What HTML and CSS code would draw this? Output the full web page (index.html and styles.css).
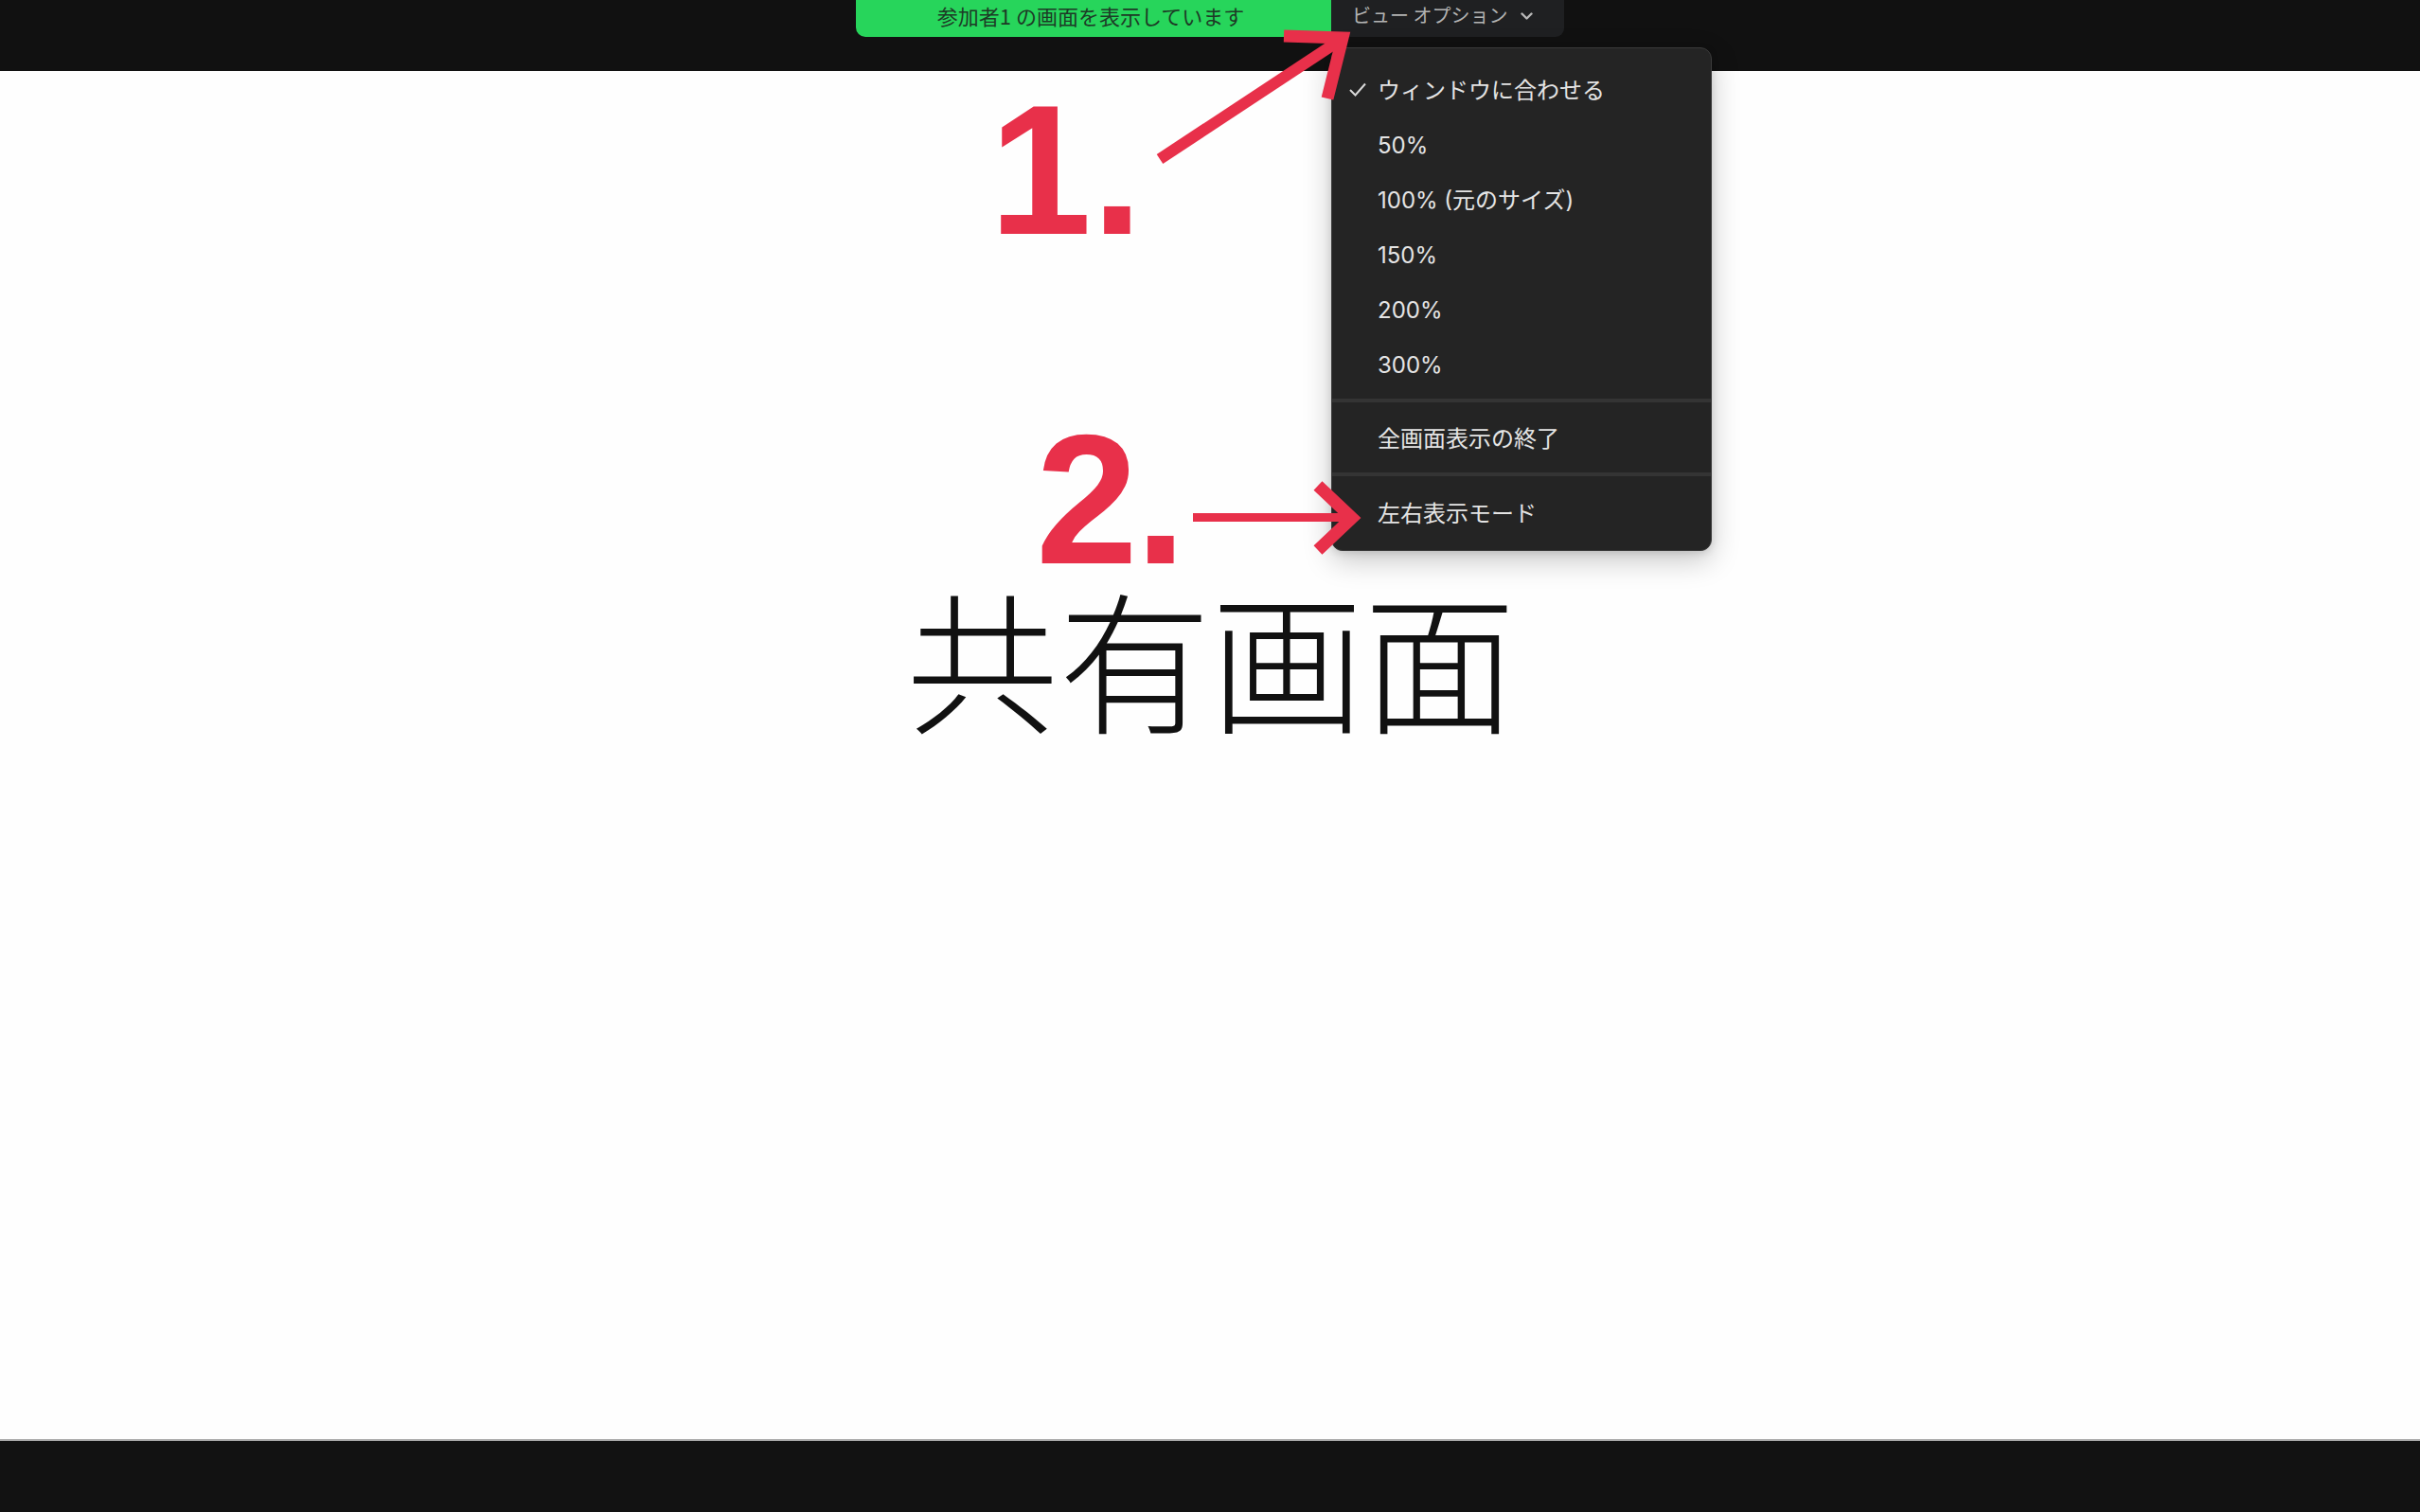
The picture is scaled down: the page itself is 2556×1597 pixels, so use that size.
FILE: index.html
```html
<!DOCTYPE html>
<html lang="ja">
<head>
<meta charset="utf-8">
<title>画面共有</title>
<link rel="stylesheet" href="styles.css">
</head>
<body>
<div class="screen">
  <header class="topbar">
    <div class="share-group">
      <div class="banner">参加者1 の画面を表示しています</div>
      <div class="view-btn">
        <span class="view-label">ビュー オプション</span>
        <svg class="chev" width="13" height="8" viewBox="0 0 13 8"><polyline points="1.5,1.5 6.5,6.5 11.5,1.5" fill="none" stroke="#b8b8b8" stroke-width="2.4" stroke-linecap="round" stroke-linejoin="round"/></svg>
        <div class="menu">
          <div class="menu-section sec-a">
            <div class="menu-item"><span class="check"><svg width="18" height="15" viewBox="0 0 18 15"><polyline points="1,8 6.5,13.5 17,1.5" fill="none" stroke="#d8d8d8" stroke-width="2"/></svg></span><span class="label">ウィンドウに合わせる</span></div>
            <div class="menu-item"><span class="check"></span><span class="label">50%</span></div>
            <div class="menu-item"><span class="check"></span><span class="label">100% (元のサイズ)</span></div>
            <div class="menu-item"><span class="check"></span><span class="label">150%</span></div>
            <div class="menu-item"><span class="check"></span><span class="label">200%</span></div>
            <div class="menu-item"><span class="check"></span><span class="label">300%</span></div>
          </div>
          <div class="menu-sep"></div>
          <div class="menu-section sec-b">
            <div class="menu-item"><span class="check"></span><span class="label">全画面表示の終了</span></div>
          </div>
          <div class="menu-sep"></div>
          <div class="menu-section sec-c">
            <div class="menu-item"><span class="check"></span><span class="label">左右表示モード</span></div>
          </div>
        </div>
      </div>
    </div>
  </header>
  <main class="stage">
    <div class="shared-text">共有画面</div>
  </main>
  <footer class="bottombar"></footer>

  <div class="anno-num num-1">1.</div>
  <div class="anno-num num-2">2.</div>
  <svg class="annotations" width="2556" height="1597" viewBox="0 0 2556 1597">
    <g fill="none" stroke="#e8304a">
      <line x1="1225" y1="168" x2="1410" y2="46" stroke-width="12"/>
      <polyline points="1356,38 1418,40 1402,104" stroke-width="13" stroke-linejoin="miter" stroke-miterlimit="10"/>
      <line x1="1260" y1="546.5" x2="1422" y2="546.5" stroke-width="9"/>
      <polyline points="1392,513 1428,547 1392,581" stroke-width="13" stroke-linejoin="miter" stroke-miterlimit="10"/>
    </g>
  </svg>
</div>
</body>
</html>
```
FILE: styles.css
```css
html, body {
  margin: 0;
  padding: 0;
}
body {
  width: 2556px;
  height: 1597px;
  overflow: hidden;
  font-family: "Noto Sans CJK JP", "Noto Sans", sans-serif;
  background: #111111;
}
.screen {
  position: relative;
  width: 2556px;
  height: 1597px;
  display: flex;
  flex-direction: column;
}
.topbar {
  height: 75px;
  flex: 0 0 75px;
  background: #111111;
  display: flex;
  justify-content: center;
  align-items: flex-start;
  position: relative;
  z-index: 2;
}
.share-group {
  display: flex;
  height: 39px;
}
.banner {
  width: 502px;
  height: 39px;
  background: #27d55b;
  color: #1d3b26;
  font-size: 22px;
  line-height: 33px;
  text-align: center;
  border-radius: 0 0 0 10px;
  padding-right: 6px;
  box-sizing: border-box;
}
.view-btn {
  position: relative;
  width: 246px;
  height: 39px;
  background: #1f2022;
  border-radius: 0 0 9px 0;
  display: flex;
  align-items: center;
  padding: 0 0 8px 22px;
  box-sizing: border-box;
  color: #b3b3b3;
  font-size: 20px;
}
.chev {
  margin-left: 14px;
  margin-top: 2px;
}
.menu {
  position: absolute;
  left: 0;
  top: 50px;
  width: 402px;
  box-sizing: border-box;
  background: #242424;
  border: 1px solid #3b3b3b;
  border-radius: 12px;
  box-shadow: 0 10px 30px rgba(0, 0, 0, 0.22), 0 2px 8px rgba(0, 0, 0, 0.12);
  color: #e4e4e4;
  font-family: "Inter", "Noto Sans CJK JP", sans-serif;
  font-size: 24px;
  overflow: hidden;
}
.menu-section.sec-a { padding: 13px 0 9px; }
.menu-section.sec-b { padding: 7px 0 9px; }
.menu-section.sec-c { padding: 8px 0 12px; }
.menu-item {
  height: 58px;
  box-sizing: border-box;
  display: flex;
  padding: 0 0 0 18px;
}
.check {
  width: 30px;
  flex: 0 0 30px;
  display: flex;
  align-items: center;
  padding-top: 2px;
}
.label {
  display: block;
  line-height: 52px;
  padding-top: 6px;
}
.menu-sep {
  height: 4px;
  background: #343434;
}
.stage {
  flex: 1 1 auto;
  background: #fefefe;
  display: flex;
  flex-direction: column;
  align-items: center;
  position: relative;
  z-index: 1;
}
.shared-text {
  margin-top: 537px;
  font-size: 161px;
  line-height: 1;
  font-weight: 300;
  color: #111111;
  letter-spacing: 0;
  padding-left: 2px;
}
.bottombar {
  flex: 0 0 77px;
  height: 77px;
  background: #121212;
  border-top: 2px solid #a8a8a8;
  box-sizing: border-box;
}
.annotations {
  position: absolute;
  left: 0;
  top: 0;
  z-index: 5;
  pointer-events: none;
}
.anno-num {
  position: absolute;
  z-index: 5;
  font-family: "Liberation Sans", Arial, sans-serif;
  font-weight: 700;
  font-size: 194px;
  line-height: 0.75;
  color: #e8304a;
  white-space: nowrap;
}
.num-1 {
  left: 1045px;
  top: 107px;
}
.num-2 {
  left: 1094px;
  top: 455px;
  letter-spacing: -3px;
}
```
